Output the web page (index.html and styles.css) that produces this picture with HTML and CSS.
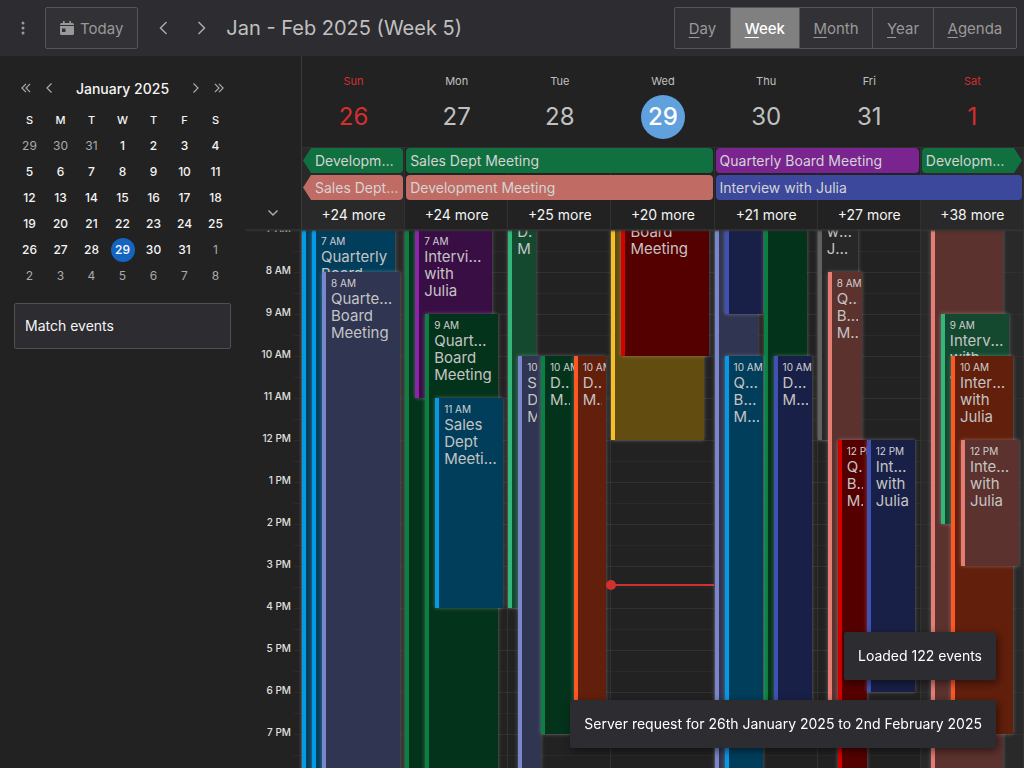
FILE: index.html
```html
<!DOCTYPE html>
<html lang="en">
<head>
<meta charset="utf-8">
<meta name="viewport" content="width=device-width, initial-scale=1">
<title>Calendar</title>
<link rel="stylesheet" href="styles.css">
</head>
<body>
<div class="app">
  <header class="toolbar">
    <button class="tool menu" aria-label="Menu"><svg width="4" height="14" viewBox="0 0 4 14" fill="currentColor"><circle cx="2" cy="2" r="1.5"/><circle cx="2" cy="7" r="1.5"/><circle cx="2" cy="12" r="1.5"/></svg></button>
    <button class="today"><svg width="14" height="14" viewBox="0 0 14 14"><path fill="currentColor" fill-rule="evenodd" d="M3 0h1.600v2h4.800V0H11v2h1.500Q14 2 14 3.500V4H0v-.5Q0 2 1.500 2H3zM0 5h14v7.500Q14 14 12.500 14h-11Q0 14 0 12.500zM2 7.500v3.500h3.500V7.500z"/></svg>Today</button>
    <button class="tool prev" aria-label="Previous week"><svg width="9" height="14" viewBox="0 0 9 14"><path class="stroke" d="M7.500 1 1.500 7l6 6"/></svg></button>
    <button class="tool next" aria-label="Next week"><svg width="9" height="14" viewBox="0 0 9 14"><path class="stroke" d="m1.500 1 6 6-6 6"/></svg></button>
    <h1 class="title">Jan - Feb 2025 (Week 5)</h1>
    <div class="views">
      <button><u>D</u>ay</button><button class="active" aria-pressed="true"><u>W</u>eek</button><button><u>M</u>onth</button><button><u>Y</u>ear</button><button><u>A</u>genda</button>
    </div>
  </header>
  <div class="content">
    <aside class="sidebar">
      <div class="month-nav">
        <button class="tool" aria-label="Previous year"><svg width="10" height="10" viewBox="0 0 10 10"><path class="thin" d="M5 .8.9 5 5 9.200M9.100.8 5 5l4.100 4.200"/></svg></button>
        <button class="tool" aria-label="Previous month"><svg width="10" height="10" viewBox="0 0 10 10"><path class="thin" d="M6.500.5 2 5l4.500 4.500"/></svg></button>
        <strong>January 2025</strong>
        <button class="tool" aria-label="Next month"><svg width="10" height="10" viewBox="0 0 10 10"><path class="thin" d="M3.500.5 8 5 3.500 9.500"/></svg></button>
        <button class="tool" aria-label="Next year"><svg width="10" height="10" viewBox="0 0 10 10"><path class="thin" d="M.9.8 5 5 .9 9.200M5 .8 9.100 5 5 9.200"/></svg></button>
      </div>
      <table class="month">
        <thead><tr><th>S</th><th>M</th><th>T</th><th>W</th><th>T</th><th>F</th><th>S</th></tr></thead>
        <tbody>
          <tr><td class="other">29</td><td class="other">30</td><td class="other">31</td><td>1</td><td>2</td><td>3</td><td>4</td></tr>
          <tr><td>5</td><td>6</td><td>7</td><td>8</td><td>9</td><td>10</td><td>11</td></tr>
          <tr><td>12</td><td>13</td><td>14</td><td>15</td><td>16</td><td>17</td><td>18</td></tr>
          <tr><td>19</td><td>20</td><td>21</td><td>22</td><td>23</td><td>24</td><td>25</td></tr>
          <tr><td>26</td><td>27</td><td>28</td><td><span class="now-date">29</span></td><td>30</td><td>31</td><td class="other">1</td></tr>
          <tr><td class="other">2</td><td class="other">3</td><td class="other">4</td><td class="other">5</td><td class="other">6</td><td class="other">7</td><td class="other">8</td></tr>
        </tbody>
      </table>
      <input class="filter" type="text" aria-label="Match events" placeholder="Match events">
    </aside>
    <main class="week">
      <div class="head">
        <div class="gutter"><button class="tool" aria-label="Expand all-day events"><svg width="12" height="8" viewBox="0 0 12 8"><path class="stroke" d="m1.500 1.500 4.500 4.500 4.500-4.500"/></svg></button></div>
        <div class="head-days">
          <div class="day-names">
            <div class="weekend"><span>Sun</span><b>26</b></div>
            <div><span>Mon</span><b>27</b></div>
            <div><span>Tue</span><b>28</b></div>
            <div class="current"><span>Wed</span><b>29</b></div>
            <div><span>Thu</span><b>30</b></div>
            <div><span>Fri</span><b>31</b></div>
            <div class="weekend"><span>Sat</span><b>1</b></div>
          </div>
          <div class="allday">
            <div class="cell d1 off"></div><div class="cell d2"></div><div class="cell d3"></div><div class="cell d4"></div><div class="cell d5"></div><div class="cell d6"></div><div class="cell d7 off"></div>
            <div class="bar r1 d1 green from-before">Development Meeting</div>
            <div class="bar r1 d2 span3 green">Sales Dept Meeting</div>
            <div class="bar r1 d5 span2 purple">Quarterly Board Meeting</div>
            <div class="bar r1 d7 green to-after">Development Meeting</div>
            <div class="bar r2 d1 pink from-before">Sales Dept Meeting</div>
            <div class="bar r2 d2 span3 pink">Development Meeting</div>
            <div class="bar r2 d5 span3 navy">Interview with Julia</div>
            <button class="more d1">+24 more</button><button class="more d2">+24 more</button><button class="more d3">+25 more</button><button class="more d4">+20 more</button><button class="more d5">+21 more</button><button class="more d6">+27 more</button><button class="more d7">+38 more</button>
          </div>
        </div>
      </div>
      <div class="body">
        <div class="axis">
          <div>7 AM</div><div>8 AM</div><div>9 AM</div><div>10 AM</div><div>11 AM</div><div>12 PM</div><div>1 PM</div><div>2 PM</div><div>3 PM</div><div>4 PM</div><div>5 PM</div><div>6 PM</div><div>7 PM</div>
        </div>
        <div class="days">
          <div class="day off">
            <div class="event sky" style="--s:5;--e:24;--x:0%;--w:82%"></div>
            <div class="event sky" style="--s:7;--e:24;--x:9.800%;--w:81%"><time>7 AM</time><p>Quarterly Board Meeting</p></div>
            <div class="event lavender" style="--s:8;--e:24;--x:19.600%;--w:76.500%"><time>8 AM</time><p>Quarterly Board Meeting</p></div>
          </div>
          <div class="day">
            <div class="event green" style="--s:5;--e:24;--x:0%;--w:80%"></div>
            <div class="event purple" style="--s:7;--e:11;--x:9.800%;--w:75.500%"><time>7 AM</time><p>Interview with Julia</p></div>
            <div class="event green" style="--s:9;--e:24;--x:19.600%;--w:71%"><time>9 AM</time><p>Quarterly Board Meeting</p></div>
            <div class="event sky" style="--s:11;--e:16;--x:29.400%;--w:66.500%"><time>11 AM</time><p>Sales Dept Meeting</p></div>
          </div>
          <div class="day">
            <div class="event sage" style="--s:6;--e:16;--x:0%;--w:27.500%"><time>6 AM</time><p>Sales Dept Meeting</p></div>
            <div class="event lavender" style="--s:10;--e:24;--x:9.800%;--w:22.500%"><time>10 AM</time><p>Sales Dept Meeting</p></div>
            <div class="event green" style="--s:10;--e:19;--x:32%;--w:32%"><time>10 AM</time><p>Development Meeting</p></div>
            <div class="event orange" style="--s:10;--e:19;--x:64%;--w:32%"><time>10 AM</time><p>Development Meeting</p></div>
          </div>
          <div class="day">
            <div class="event yellow" style="--s:5;--e:12;--x:0%;--w:90.500%"></div>
            <div class="event red" style="--s:6;--e:10;--x:9.800%;--w:86%"><time>6 AM</time><p>Quarterly Board Meeting</p></div>
            <div class="now-line"></div>
          </div>
          <div class="day">
            <div class="event lavender" style="--s:5;--e:24;--x:0%;--w:43%"></div>
            <div class="event navy" style="--s:5;--e:9;--x:9.800%;--w:38%"></div>
            <div class="event green" style="--s:5;--e:19;--x:48%;--w:43%"></div>
            <div class="event sky" style="--s:10;--e:24;--x:9.800%;--w:38%"><time>10 AM</time><p>Quarterly Board Meeting</p></div>
            <div class="event navy" style="--s:10;--e:19;--x:57.800%;--w:38%"><time>10 AM</time><p>Development Meeting</p></div>
          </div>
          <div class="day">
            <div class="event graphite" style="--s:6;--e:12;--x:0%;--w:39%"><time>6 AM</time><p>Interview with Julia</p></div>
            <div class="event pink" style="--s:8;--e:19;--x:9.800%;--w:33.500%"><time>8 AM</time><p>Quarterly Board Meeting</p></div>
            <div class="event red" style="--s:12;--e:24;--x:19.600%;--w:28.500%"><time>12 PM</time><p>Quarterly Board Meeting</p></div>
            <div class="event navy" style="--s:12;--e:18;--x:48%;--w:47.500%"><time>12 PM</time><p>Interview with Julia</p></div>
          </div>
          <div class="day off">
            <div class="event pink" style="--s:5;--e:24;--x:9.800%;--w:71%"></div>
            <div class="event sage" style="--s:9;--e:14;--x:19.600%;--w:66.500%"><time>9 AM</time><p>Interview with Julia</p></div>
            <div class="event orange" style="--s:10;--e:19;--x:29.400%;--w:61%"><time>10 AM</time><p>Interview with Julia</p></div>
            <div class="event pink" style="--s:12;--e:15;--x:39.200%;--w:56.500%"><time>12 PM</time><p>Interview with Julia</p></div>
          </div>
        </div>
      </div>
    </main>
  </div>
</div>
<div class="toasts" role="status">
  <div>Loaded 122 events</div>
  <div>Server request for 26th January 2025 to 2nd February 2025</div>
</div>
</body>
</html>
```
FILE: styles.css
```css
*, *::before, *::after { box-sizing: border-box; }
body {
  margin: 0;
  background: #222;
  color: #f5f5f5;
  font: 14px/17px Inter, "Liberation Sans", sans-serif;
}
button, input { font: inherit; color: inherit; }
button { background: none; border: 0; padding: 0; cursor: pointer; }
.stroke, .thin { fill: none; stroke: currentColor; stroke-width: 1.5; }
.thin { stroke-width: 1.2; }
.tool { display: grid; place-items: center; color: #aaa; }
.app { display: flex; flex-direction: column; height: 100vh; overflow: hidden; }

/* toolbar */
.toolbar {
  position: relative;
  z-index: 2;
  display: flex;
  align-items: center;
  flex: none;
  height: 56px;
  padding: 0 7px 0 14px;
  background: #2d2c31;
}
.menu { width: 17px; margin-right: 14px; color: #999; }
.today {
  display: flex;
  align-items: center;
  gap: 6px;
  height: 42px;
  padding: 0 14px;
  border: 1px solid #555;
  border-radius: 2px;
  background: #323136;
  color: #999;
  font-size: 15px;
}
.prev { width: 38px; margin-left: 6px; }
.next { width: 38px; }
.title { margin: 0 0 0 6px; font-size: 20px; font-weight: 400; color: #c0c0c0; line-height: 28px; }
.views { display: flex; width: 343px; margin-left: auto; height: 42px; border: 1px solid #555; border-radius: 2px; background: #323136; color: #999; }
.views button { flex: auto; padding: 0 12px; font-size: 15px; }
.views button + button { border-left: 1px solid #555; }
.views .active { background: #808080; color: #fff; font-weight: 500; }
.views u { text-underline-offset: 3px; }

.content { display: flex; flex: 1; min-height: 0; }

/* sidebar */
.sidebar { flex: none; width: 245px; padding: 22px 14px 0; }
.month-nav { display: flex; width: 217px; align-items: center; height: 20px; }
.month-nav .tool { width: 24px; height: 20px; }
.month-nav strong { flex: 1; text-align: center; font-weight: 500; }
.month { width: 217px; margin-top: 8px; border-collapse: collapse; table-layout: fixed; text-align: center; font-size: 12px; }
.month th { height: 27px; padding: 2px 0 0; font-size: 11px; font-weight: 500; }
.month td { height: 26px; padding: 0; font-weight: 500; line-height: 24px; }
.month .other { color: #aaa; font-weight: 400; }
.now-date { display: block; width: 24px; height: 24px; margin: auto; border-radius: 50%; background: #1565c0; color: #fff; }
.filter {
  display: block;
  width: 217px;
  height: 46px;
  margin-top: 14px;
  padding: 0 10px 2px;
  border: 1px solid #505052;
  border-radius: 2px;
  background: #2d2c31;
}
.filter::placeholder { color: #f5f5f5; opacity: 1; }

/* week view */
.week { display: flex; flex-direction: column; flex: 1; min-width: 0; }
.head { display: flex; flex: none; position: relative; z-index: 1; border-bottom: 1px solid #303030; box-shadow: 0 2px 2px -1px #333; }
.gutter { display: flex; align-items: flex-end; justify-content: center; flex: none; width: 56px; padding-bottom: 12px; }
.head-days { flex: 1; min-width: 0; border-left: 1px solid #3a3a3a; }
.day-names, .days { display: grid; grid-template-columns: repeat(7, minmax(0, 1fr)); }
.day-names { height: 91px; padding-top: 17px; text-align: center; color: #c0c0c0; }
.day-names > div { display: flex; flex-direction: column; align-items: center; gap: 5px; }
.day-names span { font-size: 11px; }
.day-names b { width: 44px; height: 44px; border-radius: 50%; font-size: 24px; line-height: 44px; font-weight: 400; }
.day-names .weekend { color: #d32f2f; }
.day-names .current b { background: #60a0dd; color: #fff; font-weight: 500; }
.allday {
  display: grid;
  grid-template-columns: repeat(7, minmax(0, 1fr));
  grid-template-rows: 25px 25px 27px;
  row-gap: 2px;
  border-top: 1px solid #303030;
}
.cell { grid-row: 1 / 4; border-right: 1px solid #303030; }
.off { background: #292929; }
.d1 { grid-column-start: 1; }
.d2 { grid-column-start: 2; }
.d3 { grid-column-start: 3; }
.d4 { grid-column-start: 4; }
.d5 { grid-column-start: 5; }
.d6 { grid-column-start: 6; }
.d7 { grid-column-start: 7; }
.r1 { grid-row: 1; }
.r2 { grid-row: 2; }
.span2 { grid-column-end: span 2; }
.span3 { grid-column-end: span 3; }
.bar {
  margin: 0 2px 0 1px;
  padding: 0 4px;
  border-radius: 4px;
  line-height: 25px;
  color: #d4d4d4;
  white-space: nowrap;
  overflow: hidden;
  text-overflow: ellipsis;
}
.bar.green { background: #11703f; }
.bar.purple { background: #79248f; }
.bar.pink { background: #c06b64; }
.bar.navy { background: #3c489b; }
.from-before { padding-left: 12px; clip-path: polygon(0 50%, 8px 0, 100% 0, 100% 100%, 8px 100%); }
.to-after { padding-right: 12px; clip-path: polygon(0 0, calc(100% - 8px) 0, 100% 50%, calc(100% - 8px) 100%, 0 100%); }
.more { grid-row: 3; padding-bottom: 2px; }

/* time grid */
.body { display: flex; flex: 1; min-height: 0; overflow: hidden; }
.axis {
  flex: none;
  width: 56px;
  padding-right: 10px;
  text-align: right;
  font-size: 10px;
  line-height: 12px;
  font-weight: 500;
  color: #e0e0e0;
  background: repeating-linear-gradient(#2b2b2b 0 1px, transparent 1px 21px) right top / 7px 100% no-repeat;
}
.axis div { height: 42px; }
.axis div:first-child { margin-top: -8px; }
.days { flex: 1; min-width: 0; border-left: 1px solid #3a3a3a; }
.day {
  position: relative;
  border-right: 1px solid #333;
  background-image:
    repeating-linear-gradient(#303030 0 1px, transparent 1px 42px),
    repeating-linear-gradient(#292929 0 1px, transparent 1px 21px);
}
.event {
  position: absolute;
  left: var(--x);
  width: var(--w);
  top: calc((var(--s) - 7) * 42px);
  height: calc((var(--e) - var(--s)) * 42px);
  padding: 5px 4px 0 5px;
  border-left: 4px solid;
  box-shadow: 0 0 4px rgba(255, 255, 255, .3);
  overflow: hidden;
}
.event time { display: block; font-size: 10px; line-height: 13px; white-space: nowrap; color: #d0d0d0; }
.event p { margin: 0; font-size: 15px; color: #c4c4c4; overflow: hidden; text-overflow: ellipsis; }
.event.sky { border-color: #039be5; background: #013e5c; }
.event.lavender { border-color: #7986cb; background: #303551; }
.event.green { border-color: #0b8043; background: #04331b; }
.event.sage { border-color: #33b679; background: #144930; }
.event.purple { border-color: #8e24aa; background: #390e44; }
.event.orange { border-color: #ff5722; background: #621f0c; }
.event.yellow { border-color: #f6bf26; background: #634c0f; }
.event.red { border-color: #d50000; background: #550000; }
.event.navy { border-color: #3f51b5; background: #192048; }
.event.pink { border-color: #e67c73; background: #5c322e; }
.event.graphite { border-color: #616161; background: #272727; }
.now-line { position: absolute; left: 0; right: 0; top: 354px; height: 2px; background: #d32f2f; }
.now-line::before { content: ""; position: absolute; left: -5px; top: -4px; width: 10px; height: 10px; border-radius: 50%; background: #d32f2f; }

/* notifications */
.toasts { position: fixed; right: 28px; bottom: 20px; z-index: 3; display: flex; flex-direction: column; align-items: flex-end; gap: 20px; }
.toasts div { padding: 0 14px; line-height: 48px; border-radius: 2px; background: #2d2c31; color: #fff; box-shadow: 2px 3px 8px rgba(0, 0, 0, .5); }
```
